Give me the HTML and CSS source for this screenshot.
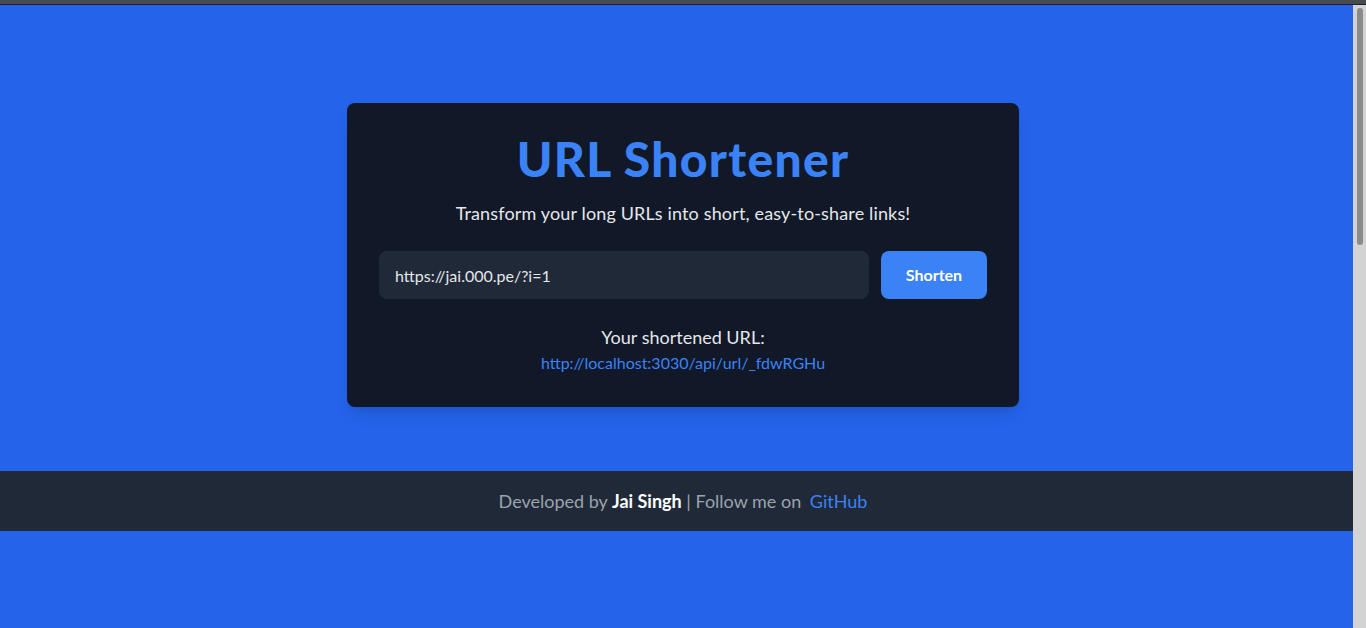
FILE: index.html
```html
<!DOCTYPE html>
<html lang="en">
<head>
<meta charset="utf-8">
<title>URL Shortener</title>
<link rel="stylesheet" href="styles.css">
</head>
<body>
<div class="topbar"></div>
<main class="main">
  <section class="card">
    <h1 class="title">URL Shortener</h1>
    <p class="subtitle">Transform your long URLs into short, easy-to-share links!</p>
    <form class="form">
      <input class="input" type="text" value="https://jai.000.pe/?i=1">
      <button class="btn" type="button">Shorten</button>
    </form>
    <div class="result">
      <p class="result-label">Your shortened URL:</p>
      <a class="result-link" href="#">http://localhost:3030/api/url/_fdwRGHu</a>
    </div>
  </section>
</main>
<footer class="footer">
  <p>Developed by <strong>Jai Singh</strong> | Follow me on <a class="gh" href="#">GitHub</a></p>
</footer>
<div class="scrollbar"><div class="thumb"></div></div>
</body>
</html>
```
FILE: styles.css
```css
* { box-sizing: border-box; }
html, body { margin: 0; padding: 0; }
body {
  background: #2563eb;
  font-family: Lato, "Noto Sans", sans-serif;
  min-height: 628px;
  color: #e5e7eb;
}
.topbar {
  height: 5px;
  background: #474b50;
  border-bottom: 1px solid #1e2125;
}
.main {
  display: flex;
  justify-content: center;
  padding: 98px 0 64px;
}
.card {
  width: 672px;
  background: #111827;
  border-radius: 8px;
  padding: 32px;
  box-shadow: 0 10px 15px -3px rgba(0,0,0,0.1), 0 4px 6px -4px rgba(0,0,0,0.1);
  text-align: center;
}
.title {
  margin: 0 0 16px;
  font-size: 48px;
  line-height: 48px;
  font-weight: 900;
  letter-spacing: 1.3px;
  color: #3b82f6;
}
.subtitle {
  margin: 0 0 24px;
  font-size: 18px;
  line-height: 28px;
  letter-spacing: 0.15px;
  color: #e5e7eb;
}
.form {
  display: flex;
  gap: 12px;
}
.input {
  flex: 1;
  height: 48px;
  padding: 12px 16px;
  border: none;
  border-radius: 8px;
  background: #1f2937;
  color: #e5e7eb;
  font: 16px/24px Lato, "Noto Sans", sans-serif;
  outline: none;
}
.btn {
  width: 106px;
  height: 48px;
  border: none;
  border-radius: 8px;
  background: #3b82f6;
  color: #fff;
  font: 700 16px/24px Lato, "Noto Sans", sans-serif;
}
.result {
  margin-top: 24px;
}
.result-label {
  margin: 0;
  font-size: 18px;
  line-height: 28px;
  color: #e5e7eb;
}
.result-link {
  display: inline-block;
  font-size: 16px;
  line-height: 24px;
  color: #3b82f6;
  text-decoration: none;
}
.footer {
  background: #1f2937;
  padding: 16px 0;
  text-align: center;
  color: #9ca3af;
  font-size: 18px;
  line-height: 28px;
}
.footer p { margin: 0; }
.footer strong { color: #fff; font-weight: 700; }
.gh { color: #3b82f6; text-decoration: none; margin-left: 4px; }
.scrollbar {
  position: fixed;
  top: 5px;
  right: 0;
  width: 13px;
  bottom: 0;
  background: #d3d3d3;
}
.thumb {
  position: absolute;
  top: 3px;
  left: 4px;
  width: 6px;
  height: 237px;
  border-radius: 3px;
  background: #8a8a8a;
}
```
